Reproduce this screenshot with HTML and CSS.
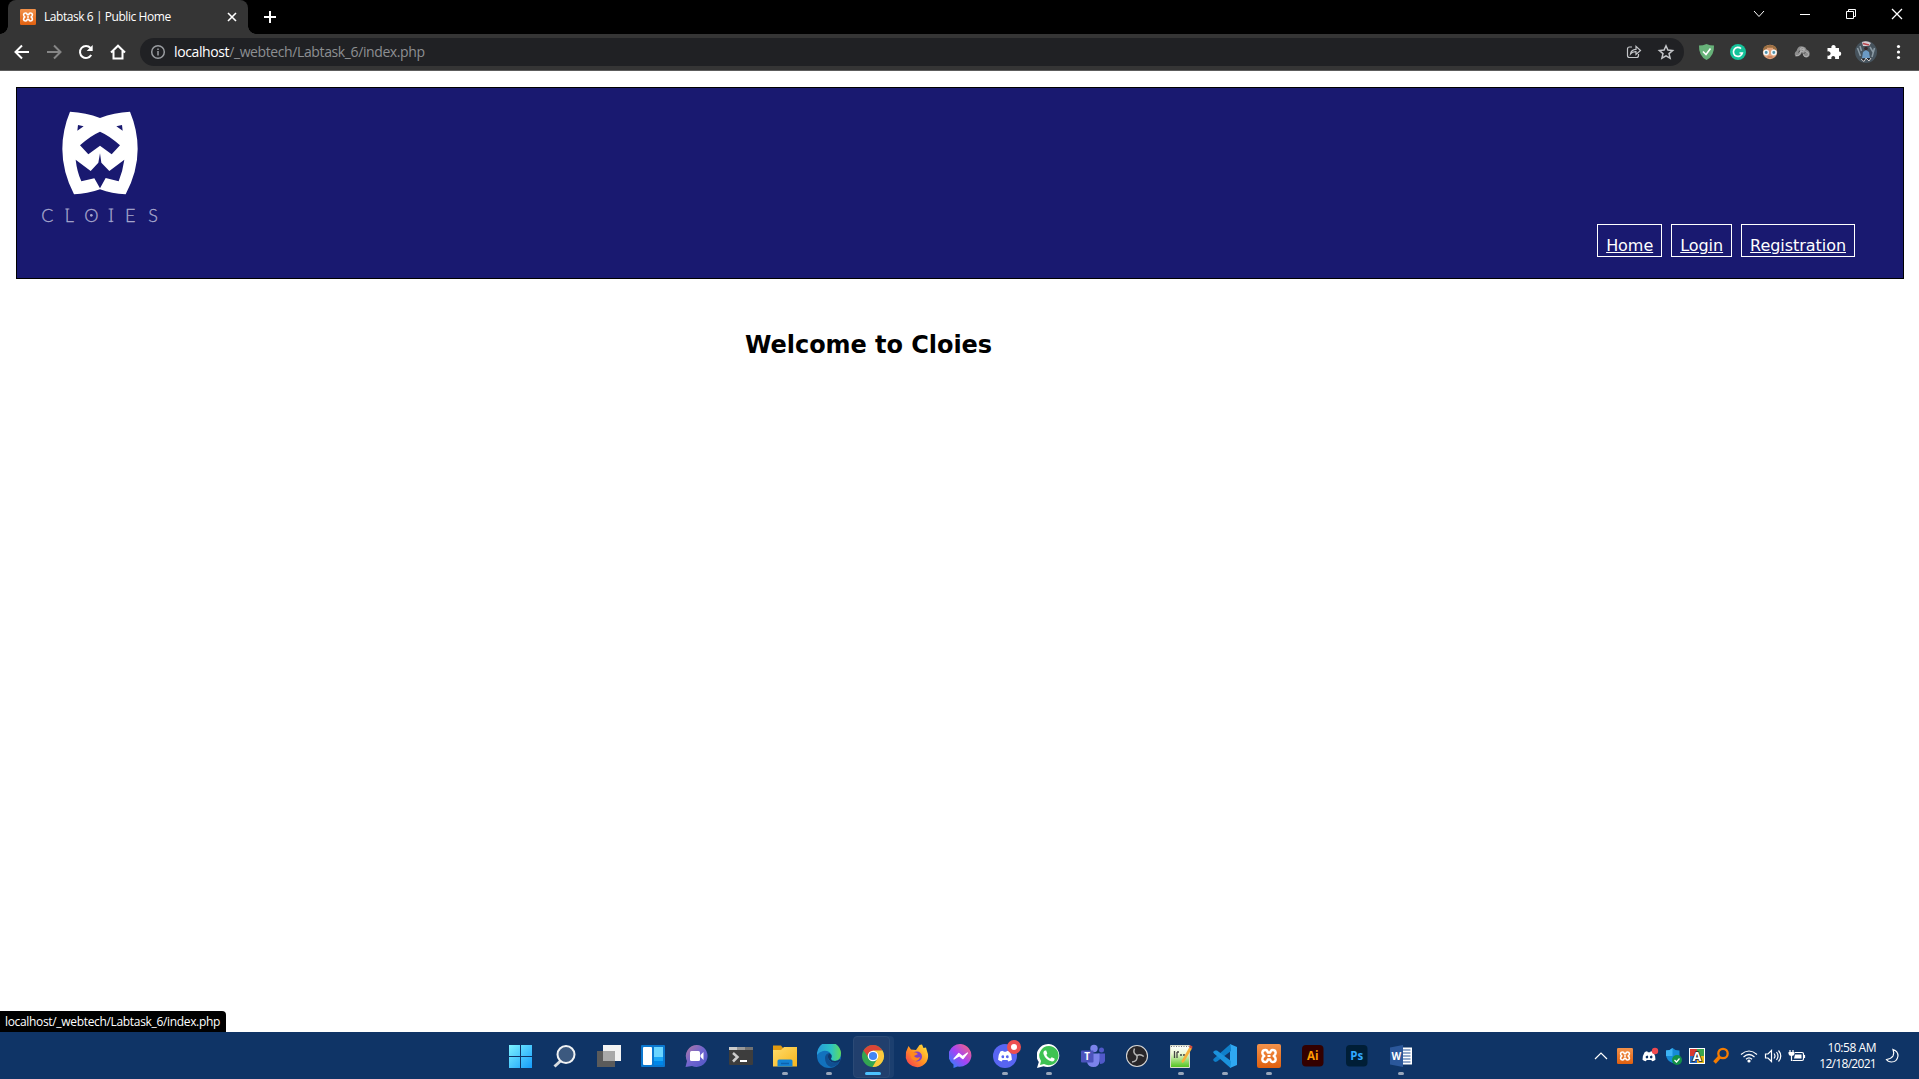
FILE: index.html
```html
<!DOCTYPE html>
<html lang="en">
<head>
<meta charset="utf-8">
<title>Labtask 6 | Public Home</title>
<link rel="stylesheet" href="styles.css">
</head>
<body>
<svg class="defs" aria-hidden="true">
  <defs>
    <linearGradient id="win" x1="0" y1="0" x2="1" y2="1"><stop offset="0" stop-color="#7df3ff"/><stop offset="1" stop-color="#159cfb"/></linearGradient>
    <linearGradient id="chat" x1="0" y1="0" x2="1" y2="1"><stop offset="0" stop-color="#b478a0"/><stop offset=".5" stop-color="#7065cf"/><stop offset="1" stop-color="#4d55c5"/></linearGradient>
    <linearGradient id="folder" x1="0" y1="0" x2="1" y2="1"><stop offset="0" stop-color="#ffdc6b"/><stop offset="1" stop-color="#f7b51c"/></linearGradient>
    <linearGradient id="edge" x1="0" y1="0" x2="1" y2="0"><stop offset="0" stop-color="#2699dd"/><stop offset=".6" stop-color="#2dc3c3"/><stop offset="1" stop-color="#5fdb5c"/></linearGradient>
    <linearGradient id="fire" x1="1" y1="0" x2="0" y2="1"><stop offset="0" stop-color="#ffe93f"/><stop offset=".5" stop-color="#ff9422"/><stop offset="1" stop-color="#f62f58"/></linearGradient>
    <linearGradient id="msg" x1="1" y1="0" x2="0" y2="1"><stop offset="0" stop-color="#ff6a70"/><stop offset=".5" stop-color="#a543f5"/><stop offset="1" stop-color="#168dff"/></linearGradient>
    <linearGradient id="note" x1="0" y1="0" x2="0" y2="1"><stop offset="0" stop-color="#fff"/><stop offset=".35" stop-color="#eef9d8"/><stop offset="1" stop-color="#4fc21a"/></linearGradient>
    <linearGradient id="xam" x1="0" y1="0" x2="0" y2="1"><stop offset="0" stop-color="#f3924b"/><stop offset="1" stop-color="#e0600f"/></linearGradient>
  </defs>
  <symbol id="xampp" viewBox="0 0 24 24">
    <rect width="24" height="24" rx="2" fill="url(#xam)"/>
    <path d="M8.500 6C4.800 6 4.300 10 7.300 12C4.300 14 4.800 18 8.500 18Q10.300 18 10.800 15.500H13.200Q13.700 18 15.500 18C19.200 18 19.700 14 16.700 12C19.700 10 19.200 6 15.500 6Q13.700 6 13.200 8.500H10.800Q10.300 6 8.500 6Z" fill="none" stroke="#fff" stroke-width="2.400" stroke-linejoin="round"/>
    <path d="M10.500 12H13.500" stroke="#fff" stroke-width="2"/>
  </symbol>
  <symbol id="clyde" viewBox="0 0 16 12">
    <path d="M3 1Q4.500 .2 6 0L6.600 1.100H9.400L10 0Q11.600 .2 13 1Q15.600 5 15.400 9.700Q13.800 11 11.600 11.500L10.600 9.900H5.400L4.400 11.500Q2.200 11 .6 9.700Q.4 5 3 1ZM5.600 5A1.500 1.600 0 1 0 5.700 8.200A1.500 1.600 0 1 0 5.600 5ZM10.400 5A1.500 1.600 0 1 0 10.500 8.200A1.500 1.600 0 1 0 10.400 5Z" fill="#fff" fill-rule="evenodd"/>
  </symbol>
</svg>

<div class="tabstrip">
  <div class="tab">
    <svg class="favicon"><use href="#xampp"/></svg>
    <span class="tab-title">Labtask 6 | Public Home</span>
    <svg class="tab-close" viewBox="0 0 10 10"><path d="M1 1L9 9M9 1L1 9"/></svg>
  </div>
  <svg class="new-tab" viewBox="0 0 12 12"><path d="M6 0V12M0 6H12"/></svg>
  <div class="controls">
    <svg viewBox="0 0 46 28"><path d="M18 11L23 16.500L28 11"/></svg>
    <svg viewBox="0 0 46 28"><path d="M18 14.500H28"/></svg>
    <svg viewBox="0 0 46 28"><path d="M18.500 11.500H25.500V18.500H18.500ZM20.500 11.500V9.500H27.500V16.500H25.500"/></svg>
    <svg viewBox="0 0 46 28"><path stroke-width="1.300" d="M18 9L28 19M28 9L18 19"/></svg>
  </div>
</div>

<div class="toolbar">
  <svg class="cell line" viewBox="0 0 32 36"><path d="M23 18H10M16 11.500L9.500 18L16 24.500"/></svg>
  <svg class="cell line off" viewBox="0 0 32 36"><path d="M9 18H22M16 11.500L22.500 18L16 24.500"/></svg>
  <svg class="cell line" viewBox="0 0 32 36"><path d="M21.200 21A6 6 0 1 1 20.500 14"/><path d="M22.700 11V17H16.700Z" fill="#fff" stroke="none"/></svg>
  <svg class="cell line" viewBox="0 0 32 36"><path d="M9 18.500L16 11.700L23 18.500M11.500 17V24.500H20.500V17"/></svg>
  <div class="address">
    <svg class="info" viewBox="0 0 16 16"><circle cx="8" cy="8" r="6.300"/><path d="M8 7V11.500M8 4.500V6"/></svg>
    <span class="url"><b>localhost</b>/_webtech/Labtask_6/index.php</span>
    <svg class="cell thin push" viewBox="0 0 32 28"><path d="M14 9H11.500Q9.500 9 9.500 11V17.500Q9.500 19.500 11.500 19.500H18.500Q20.500 19.500 20.500 17.500V16M12.500 16Q13 11.500 18 11.300V8.300L22.500 12.500L18 16.500V13.700Q14.500 13.500 12.500 16Z"/></svg>
    <svg class="cell thin" viewBox="0 0 32 28"><path d="M16 7.800L17.900 12.100L22.600 12.500L19 15.600L20.100 20.200L16 17.800L11.900 20.200L13 15.600L9.400 12.500L14.100 12.100Z" stroke-width="1.500"/></svg>
  </div>
  <svg class="cell" viewBox="0 0 32 36"><path d="M16.500 10Q20 11.500 24 11.500Q24.500 22 16.500 26Q8.500 22 9 11.500Q13 11.500 16.500 10Z" fill="#67b279"/><path d="M13 17.500L16 20.500L20.500 14.500" fill="none" stroke="#fff" stroke-width="1.600"/></svg>
  <svg class="cell" viewBox="0 0 32 36"><circle cx="16" cy="18" r="8" fill="#15c39a"/><path d="M19 14.600A4.500 4.500 0 1 0 20.300 19H17.500" fill="none" stroke="#fff" stroke-width="1.700"/></svg>
  <svg class="cell" viewBox="0 0 32 36"><circle cx="16" cy="18" r="7.200" fill="#e2a178"/><path d="M9 17Q8.500 11 15.500 11Q23 10.500 23 17L19 15H13Z" fill="#9c7043"/><path d="M13 14.500H19" stroke="#e2a178" stroke-width="1.500"/><path d="M13.500 23H18.500" stroke="#b06850"/><g fill="#4f92ad" stroke="#f0f4f6" stroke-width="1.500"><circle cx="12.200" cy="18.500" r="2.200"/><circle cx="19.800" cy="18.500" r="2.200"/></g></svg>
  <svg class="cell" viewBox="0 0 32 36"><path d="M9.500 22.500Q7.500 19 10.500 17Q12 11 17 12.500Q20 13 20.500 15.500Q24.500 17 23.500 21.500Q21.500 25 18 22.500L16 18.500Q14 23 9.500 22.500Z" fill="#8c8c8c"/><g fill="none" stroke="#b4b4b4"><path d="M10 21.500Q14 22 14.500 18T18.500 16"/><circle cx="20" cy="20.300" r="2.500"/><circle cx="16.300" cy="15.600" r="2"/></g><path d="M12.500 18.500L14 16.500M17.500 20L19.500 18" stroke="#444"/></svg>
  <svg class="cell" viewBox="0 0 32 36"><path d="M9.500 14H13.500A2.200 2.200 0 1 1 17.500 14H21V17.500A2.200 2.200 0 1 1 21 22V25H17A2 2 0 1 0 13.500 25H9.500V21.500A2.200 2.200 0 1 0 9.500 17.500Z" fill="#fff"/></svg>
  <svg class="cell" viewBox="0 0 32 36"><circle cx="16" cy="18" r="11" fill="#46535d"/><path d="M12 8Q17 6 21 9L19 12H13Z" fill="#d8cbd2"/><path d="M13 9.500L19 11" stroke="#b8454c" stroke-width="1.500"/><path d="M7.500 14L10.500 22M24.500 14L22 23M20 13L23 18M10 12L11.500 17" stroke="#8b9aa4" stroke-width="1.500"/><path d="M13 18L16 16L19 18L20 24H12Z" fill="#6b9ac4"/><circle cx="16" cy="14.500" r="1.800" fill="#38262a"/><path d="M11 25L14 27.500L16 24L19 27L21 24" fill="#191d24" stroke="#d0cccb"/></svg>
  <svg class="cell" viewBox="0 0 32 36"><g fill="#fff"><circle cx="16.500" cy="12.500" r="1.600"/><circle cx="16.500" cy="18" r="1.600"/><circle cx="16.500" cy="23.500" r="1.600"/></g></svg>
</div>

<main class="page">
  <header class="banner">
    <svg class="logo" viewBox="120 108 369 336">
      <path fill="#fff" fill-rule="evenodd" d="M210 110Q258 112 300 129Q342 112 390 110Q413 165 413 222Q413 290 377 358Q335 356 300 343Q262 357 222 358Q187 290 187 222Q187 165 210 110ZM234 150L251 154L232 167ZM366 150L349 154L368 167ZM300 170Q330 183 360 211L335 238L300 212L265 238L240 211Q270 183 300 170ZM227 254L272 288L295 263L300 235L304 263L328 288L373 254Q368 290 356 319L317 309L300 340L283 310L244 319Q231 290 227 254Z"/>
      <text class="logo-name" y="440"><tspan x="142">C</tspan><tspan x="208">L</tspan><tspan x="274">O</tspan><tspan x="333">I</tspan><tspan x="391">E</tspan><tspan x="459">S</tspan></text>
      <path d="M326 402H340M326 439H340M196 402H208" stroke="#a9a9ce" stroke-width="3"/>
      <circle cx="274" cy="421" r="4" fill="#a9a9ce"/>
    </svg>
    <nav class="menu">
      <a href="#">Home</a>
      <a href="#">Login</a>
      <a href="#">Registration</a>
    </nav>
  </header>
  <h2 class="welcome">Welcome to Cloies</h2>
  <div class="status">localhost/_webtech/Labtask_6/index.php</div>
</main>

<footer class="taskbar">
  <div class="apps">
    <div class="app"><svg viewBox="0 0 24 24"><path fill="url(#win)" d="M0 1H11V12H0ZM12 1H23V12H12ZM0 13H11V24H0ZM12 13H23V24H12Z"/></svg></div>
    <div class="app"><svg viewBox="0 0 24 24"><path d="M8 16.500L1.500 22.500" stroke="#d7dbe0" stroke-width="3"/><circle cx="13" cy="10.500" r="8.500" fill="#3c597f" stroke="#f0f2f4" stroke-width="2"/></svg></div>
    <div class="app"><svg viewBox="0 0 24 24"><path d="M0 7H18V23H0Z" fill="#5b5b5b"/><path d="M6 1H24V17H6Z" fill="#f3f3f3"/><path d="M6 7H18V17H6Z" fill="#a9a9a9"/></svg></div>
    <div class="app"><svg viewBox="0 0 24 24"><rect y="1" width="24" height="22" rx="1" fill="#0b78d0"/><rect x="2" y="3" width="9" height="18" rx="1" fill="#fff"/><path d="M13 3H22V13H13Z" fill="#6bd5ff"/><path d="M13 13H22V17H13Z" fill="#19a7f7"/><path d="M13 17H22V21H13Z" fill="#0086e8"/></svg></div>
    <div class="app"><svg viewBox="0 0 24 24"><path fill="url(#chat)" d="M12 1A11 11 0 1 1 7 22L.5 23L2 17A11 11 0 0 1 12 1Z"/><rect x="5" y="7" width="10" height="10" rx="1.500" fill="#fff"/><path d="M15.500 11L18.500 8V16L15.500 13Z" fill="#fff"/></svg></div>
    <div class="app"><svg viewBox="0 0 24 24"><rect y="3" width="24" height="18" rx="1" fill="#3d3d3d"/><path d="M0 3H8V6H0Z" fill="#ccc"/><path d="M8 3H16V6H8Z" fill="#999"/><path d="M16 3H24V6H16Z" fill="#727272"/><path d="M4 9L8.500 13L4 17.500" fill="none" stroke="#ccc" stroke-width="2.500"/><path d="M11 17H18" stroke="#fff" stroke-width="2"/></svg></div>
    <div class="app open"><svg viewBox="0 0 24 24"><path d="M0 1.500H8L10 4V8H0Z" fill="#e19a10"/><path d="M0 6H8L11 3H24V22.500H0Z" fill="url(#folder)"/><path d="M4.500 22.500V17Q4.500 15.500 6 15.500H18Q19.500 15.500 19.500 17V22.500Z" fill="#1483d4"/><path d="M8 19.500H16" stroke="#0d62ae" stroke-width="1.500"/></svg></div>
    <div class="app open"><svg viewBox="0 0 24 24"><circle cx="12" cy="12" r="12" fill="#1272bd"/><path d="M0 11A12 12 0 0 1 24 9Q24 16 18 17Q14 17 14 14.500Q15 13 14.500 11Q12 6 6 7Q2 8 0 11Z" fill="url(#edge)"/><path d="M8 14Q8 10 12 9Q9 15 14 18Q18 20 23 16.500Q20 23 14 23Q8 21 8 14Z" fill="#104f91"/><path d="M14.500 11Q15 13 14 14.500Q14 17 18 17Q21 17 23 15L23 17Q19 20 14.500 18Q9 15 12 9Z" fill="#0f386d"/></svg></div>
    <div class="app open active"><svg viewBox="0 0 24 24"><circle cx="12" cy="12" r="11" fill="#33a651"/><path d="M2.500 6.500A11 11 0 0 1 21.500 6.500L12 7L8 14Z" fill="#db4537"/><path d="M21.500 6.500A11 11 0 0 1 11.500 23L16.500 14.500L12 6.500Z" fill="#fdc93c"/><circle cx="12" cy="12" r="4.700" fill="#4285f4" stroke="#fff" stroke-width="1.200"/></svg></div>
    <div class="app"><svg viewBox="0 0 24 24"><path fill="url(#fire)" d="M1 8L3.500 2L6 5.500L11 6L14.500 1L17 .5L18.500 4L21 3.500L22 7Q24.500 13 21.500 18Q17 24 11 23Q3 22 .8 14Z"/><circle cx="12" cy="12.500" r="5" fill="#8040c7"/><path d="M5 8L11 8.500L13 10L9 12Q11 15 15 13Q14 17 10 17Q5 15 5 8Z" fill="#ff8a1e"/></svg></div>
    <div class="app"><svg viewBox="0 0 24 24"><path fill="url(#msg)" d="M12 0A12 11.300 0 1 1 8.500 22.600L4.500 24V20.500A12 11.300 0 0 1 12 0Z"/><path d="M5 15L9.800 9.500L13.500 12.500L18.500 9L14 14.700L10.300 11.800Z" fill="#fff" stroke="#fff" stroke-width="1.200" stroke-linejoin="round"/></svg></div>
    <div class="app open"><svg viewBox="0 0 24 24"><circle cx="12" cy="12" r="12" fill="#5865f2"/><use href="#clyde" x="4.500" y="6.500" width="15" height="11.500"/></svg><span class="badge"></span></div>
    <div class="app open"><svg viewBox="0 0 24 24"><path d="M12 0A12 11.500 0 1 1 6.500 22.300L0 24L1.800 18A12 11.500 0 0 1 12 0Z" fill="#fff"/><path d="M12 2A9.800 9.600 0 1 1 7 20L3 21L4 17A9.800 9.600 0 0 1 12 2Z" fill="#3ec253"/><path d="M8 6.500Q6 7 6.500 10Q8.500 16 15 17.500Q18 17 17.500 14.500L14.700 13.200L13.200 14.800Q10.500 13.500 9.300 11L10.300 9.500L9.200 6.600Z" fill="#fff"/></svg></div>
    <div class="app"><svg viewBox="0 0 24 24"><circle cx="13" cy="4.500" r="3.700" fill="#7b83eb"/><circle cx="20.500" cy="6" r="2.500" fill="#5059c9"/><path d="M17 9.500H24V17Q23 20 19 20Z" fill="#5059c9"/><path d="M6 9.500H18.500V17Q18 23 12.500 23Q7 23 6 18Z" fill="#7b83eb"/><rect y="6.500" width="12.500" height="12" rx="1" fill="#4b53bc"/><text x="6.200" y="16" class="glyph t10">T</text></svg></div>
    <div class="app"><svg viewBox="0 0 24 24"><circle cx="12" cy="12" r="10.500" fill="#282629" stroke="#d6d6d6" stroke-width="1.100"/><g fill="none" stroke="#b5b5b5" stroke-width="1.500"><path d="M9.500 4.500Q7.500 9.500 12 11.500Q15.500 9.500 18.800 12.500"/><path d="M12 11.500Q13 17.500 7 18"/></g></svg></div>
    <div class="app open"><svg viewBox="0 0 24 24"><path d="M1.500 1.500H20.500V23.500H1.500Z" fill="url(#note)" stroke="#d9dccb"/><path d="M2 2.500H20" stroke="#777" stroke-dasharray="1 1.500"/><path d="M5.500 7V14M8 8V14M8 8H10M11 11H13M14 11H16" stroke="#444" stroke-width="1.300" fill="none"/><path d="M20.500 3L12.500 17L13 19L15 18L23 4.500Z" fill="#f5b13a"/><path d="M20 3L21 1L23.500 2.500L23 5Z" fill="#d34e3e"/></svg></div>
    <div class="app open"><svg viewBox="0 0 24 24"><path d="M17 0L24 3V21L17 24Z" fill="#2fa8f2"/><path d="M17.500 0L1 14.500L0 16L2 18L4 17.500L18 7Z" fill="#0f7fca"/><path d="M17.500 24L1 9.500L0 8L2 6.500L4 6.500L18 17Z" fill="#1b92dc"/></svg></div>
    <div class="app open"><svg viewBox="0 0 24 24"><use href="#xampp" width="24" height="24"/></svg></div>
    <div class="app"><svg viewBox="0 0 24 24"><rect x="1" y="1" width="21.500" height="21.500" rx="4" fill="#330000"/><text x="11.800" y="16" class="glyph adobe ai">Ai</text></svg></div>
    <div class="app"><svg viewBox="0 0 24 24"><rect x="1" y="1" width="21.500" height="21.500" rx="4" fill="#001e36"/><text x="11.800" y="16" class="glyph adobe ps">Ps</text></svg></div>
    <div class="app open"><svg viewBox="0 0 24 24"><path d="M12 3.500H23V20.500H12Z" fill="#fff"/><path d="M14 6H21.500M14 9H21.500M14 12H21.500M14 15H21.500M14 18H21.500" stroke="#2b579a" stroke-width="1.100"/><path d="M1 3.500L14 1V23L1 20.500Z" fill="#2b579a"/><text x="7.300" y="16" class="glyph t10">W</text></svg></div>
  </div>

  <div class="tray">
    <svg viewBox="0 0 24 24"><path class="wire" d="M6 15L12 9L18 15"/></svg>
    <svg viewBox="0 0 24 24"><use href="#xampp" x="4" y="4" width="16" height="16"/></svg>
    <svg viewBox="0 0 24 24"><use href="#clyde" x="5" y="7" width="14" height="11"/><circle cx="18" cy="7" r="3.200" fill="#f04a4f"/></svg>
    <svg viewBox="0 0 24 24"><path d="M11.500 4Q14 6.500 18.500 6.500V12Q17.500 17 11.500 19Q5 16 5 11V6.500Q9 6.500 11.500 4Z" fill="#168bd8"/><path d="M11.500 4V12H5V6.500Q9 6.500 11.500 4Z" fill="#3db4f5"/><circle cx="16" cy="16" r="5" fill="#139247"/><path d="M13.500 16L15.500 18L18.500 14.500" fill="none" stroke="#fff" stroke-width="1.200"/></svg>
    <svg viewBox="0 0 24 24"><rect x="4" y="4" width="16" height="16" fill="#fff"/><path d="M5 5H12V12H5Z" fill="#d73a30"/><path d="M12 5H19V12H12Z" fill="#3aa64c"/><path d="M5 12H12V19H5Z" fill="#286dcc"/><path d="M12 12H19V19H12Z" fill="#edb818"/><text x="12" y="16.800" class="glyph letter">A</text></svg>
    <svg viewBox="0 0 24 24"><circle cx="14" cy="9.500" r="4.700" fill="none" stroke="#f57c00" stroke-width="2.300"/><path d="M10.500 13L5.500 18.500" stroke="#f57c00" stroke-width="3.500"/></svg>
    <span class="gap"></span>
    <svg viewBox="0 0 24 24"><path class="wire" d="M4 10.500Q12 3.500 20 10.500M6.500 13Q12 8 17.500 13M9 15.300Q12 12.500 15 15.300"/><circle cx="12" cy="17" r="1.600" fill="#fff"/></svg>
    <svg viewBox="0 0 24 24"><path class="wire" d="M4.500 10H7L10.500 6.500V17.500L7 14H4.500ZM13 9.500Q15 12 13 14.500M15.500 8Q18.500 12 15.500 16M17.500 6.500Q22 12 17.500 17.500"/></svg>
    <svg viewBox="0 0 24 24"><path class="wire" d="M10 8.500H17Q18.500 8.500 18.500 10V15Q18.500 16.500 17 16.500H7.500M19.500 11V14M5 6V9M8 6V9M6.500 11V17"/><path d="M3.500 8H9.500V10Q9 12 6.500 12Q4 12 3.500 10ZM10 10.500H16.500V14.500H9Z" fill="#fff"/></svg>
    <div class="clock"><span>10:58 AM</span><span class="date">12/18/2021</span></div>
    <svg viewBox="0 0 24 24"><path class="wire" d="M13 5.500Q18 7 18 12Q17 18 11.500 18Q8 18 6.500 15.500Q11 15 13 12Q14.500 9 13 5.500Z"/></svg>
  </div>
</footer>
</body>
</html>
```

FILE: styles.css
```css
* { box-sizing: border-box; }

body {
  margin: 0;
  height: 1079px;
  display: flex;
  flex-direction: column;
  overflow: hidden;
  background: #fff;
  font-family: "Open Sans", "Noto Sans", sans-serif;
}

svg { display: block; flex: none; }
.defs { position: absolute; width: 0; height: 0; }

/* Tab strip */
.tabstrip {
  flex: none;
  height: 34px;
  display: flex;
  padding-left: 8px;
  background: #000;
}

.tab {
  position: relative;
  width: 240px;
  height: 34px;
  display: flex;
  align-items: center;
  padding: 0 11px 0 12px;
  border-radius: 8px 8px 0 0;
  background: #353535;
}

.tab::before,
.tab::after {
  content: "";
  position: absolute;
  bottom: 0;
  width: 8px;
  height: 8px;
}
.tab::before { left: -8px; background: radial-gradient(circle at 0 0, #000 7.5px, #353535 8px); }
.tab::after { right: -8px; background: radial-gradient(circle at 100% 0, #000 7.5px, #353535 8px); }

.favicon { width: 16px; height: 16px; margin-right: 8px; }
.tab-title {
  flex: 1;
  padding-bottom: 1px;
  color: #fff;
  font-size: 12px;
  letter-spacing: -0.44px;
  white-space: nowrap;
}
.tab-close { width: 10px; height: 10px; stroke: #fff; stroke-width: 1.6; }
.new-tab { width: 12px; height: 12px; margin: 11px 0 0 16px; stroke: #fff; stroke-width: 2; }

.controls { display: flex; margin: 0 -1px 0 auto; }
.controls svg { width: 46px; height: 28px; fill: none; stroke: #fff; }

/* Address bar */
.toolbar {
  flex: none;
  height: 37px;
  display: flex;
  padding: 0 5px 0 6px;
  background: #353535;
  border-bottom: 1px solid #5c5c5c;
}
.cell { width: 32px; height: 36px; }
.line { fill: none; stroke: #fff; stroke-width: 2; }
.off { stroke: #868686; }

.address {
  flex: 1;
  height: 28px;
  display: flex;
  align-items: center;
  margin: 4px 6px 0;
  padding: 0 2px 0 10px;
  border-radius: 14px;
  background: #202124;
}
.address .cell { height: 28px; }
.info { width: 16px; height: 16px; margin-right: 8px; fill: none; stroke: #9a9da1; stroke-width: 1.5; }
.url {
  padding-bottom: 1px;
  color: #8d8f92;
  font-size: 14px;
  letter-spacing: -0.39px;
  white-space: nowrap;
}
.url b { color: #fff; font-weight: 400; }
.thin { fill: none; stroke: #c4c6c9; stroke-width: 1.2; }
.push { margin-left: auto; }

/* Page */
.page {
  position: relative;
  flex: 1;
  padding: 16px 15px 0 16px;
  font-family: Verdana, "DejaVu Sans", sans-serif;
}

.banner {
  height: 192px;
  display: flex;
  justify-content: space-between;
  padding: 23px 48px 21px 23px;
  border: 1px solid #000;
  background: #191970;
}
.logo { width: 123px; height: 112px; overflow: visible; }
.logo-name {
  fill: #a9a9ce;
  stroke: #a9a9ce;
  stroke-width: 0.8;
  font: 300 54px Lato, sans-serif;
  text-anchor: middle;
}

.menu { display: flex; align-items: flex-end; gap: 9px; }
.menu a {
  height: 33px;
  padding: 11px 8px 0;
  border: 1px solid #fff;
  color: #fff;
  font-size: 16px;
  line-height: 20px;
  letter-spacing: -0.05px;
}

.welcome {
  margin: 51px 0 0 729px;
  font-size: 24px;
  line-height: 30px;
  font-weight: 700;
  letter-spacing: -0.05px;
  white-space: nowrap;
}

.status {
  position: absolute;
  left: 0;
  bottom: 0;
  width: 226px;
  height: 21px;
  padding-left: 5px;
  border-radius: 0 4px 0 0;
  background: #000;
  color: #fff;
  font: 12px/21px "Open Sans", sans-serif;
  letter-spacing: -0.33px;
  white-space: nowrap;
}

/* Taskbar */
.taskbar {
  flex: none;
  height: 47px;
  display: flex;
  justify-content: space-between;
  padding: 0 15px 0 499px;
  background: #0f3466;
}
.apps { display: flex; }
.app {
  position: relative;
  width: 44px;
  height: 47px;
  padding: 12px 0 0 10px;
}
.app svg { position: relative; width: 24px; height: 24px; }
.open::after {
  content: "";
  position: absolute;
  left: 19px;
  top: 40px;
  width: 6px;
  height: 3px;
  border-radius: 2px;
  background: #98a6bb;
}
.active::after { left: 14px; width: 16px; background: #4cc2ff; }
.active::before {
  content: "";
  position: absolute;
  left: 2px;
  top: 4px;
  width: 35px;
  height: 40px;
  border: 1px solid #2b4a76;
  border-radius: 4px;
  background: #213f6d;
  box-shadow: 4px 0 0 #1c3f6f;
}
.badge {
  position: absolute;
  left: 24px;
  top: 8px;
  width: 14px;
  height: 14px;
  border: 4px solid #ed4f50;
  border-radius: 50%;
  background: #fff;
}

.glyph { fill: #fff; font-family: "Open Sans", sans-serif; font-weight: 700; text-anchor: middle; }
.t10 { font-size: 10px; }
.letter { font-size: 13px; stroke: #222; stroke-width: 1.4; paint-order: stroke; }
.adobe { font-size: 11.5px; }
.ai { fill: #ff9a00; }
.ps { fill: #31a8ff; }

.tray { display: flex; align-items: center; }
.tray svg { width: 24px; height: 24px; }
.wire { fill: none; stroke: #fff; stroke-width: 1.2; }
.gap { width: 4px; }
.clock {
  width: 67px;
  margin-right: 4px;
  display: flex;
  flex-direction: column;
  align-items: flex-end;
  color: #fff;
  font-size: 12px;
  line-height: 16px;
  letter-spacing: -0.45px;
  white-space: nowrap;
}
.date { letter-spacing: -0.7px; }
```
